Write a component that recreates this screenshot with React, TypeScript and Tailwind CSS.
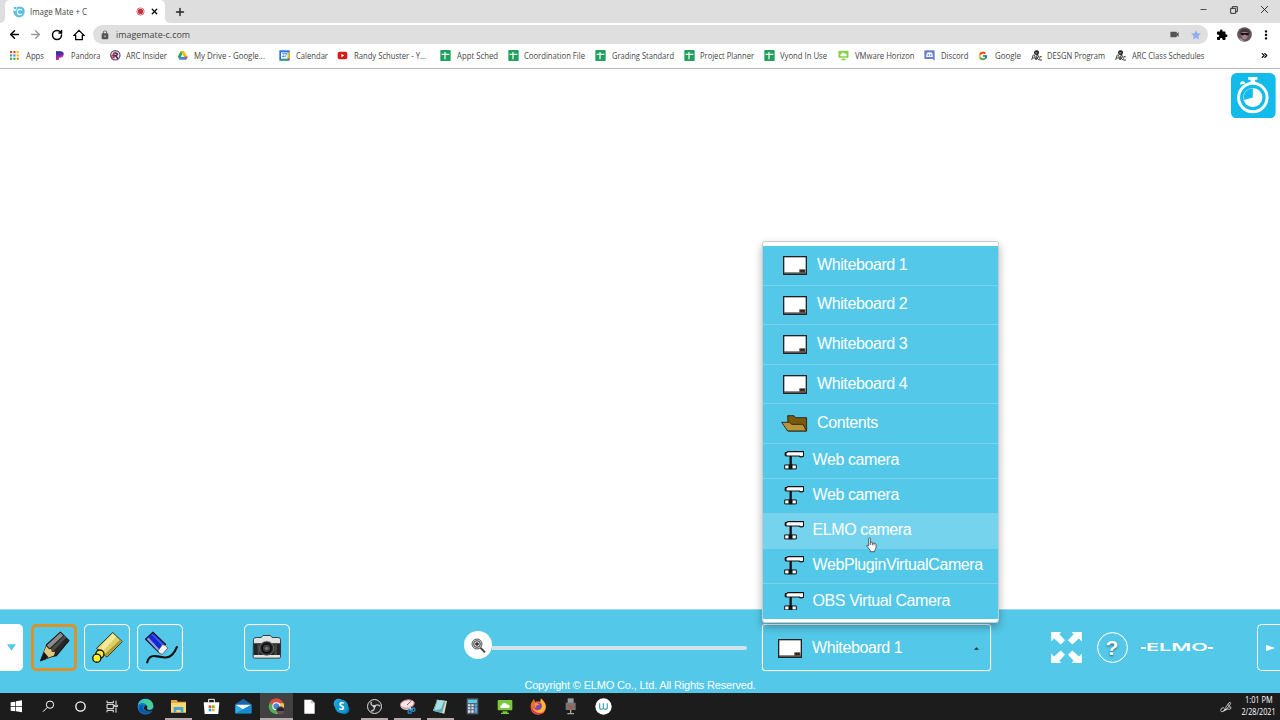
import type { ReactNode } from "react"
import { ArrowLeft, ArrowRight, ChevronsRight, Minus, Plus, RotateCw, X } from "lucide-react"
import { MdExtension, MdLock, MdMoreVert, MdStar, MdVideocam } from "react-icons/md"
import { FcGoogle } from "react-icons/fc"

function AppsIcon() {
  const colors = ["#ea4335", "#ea4335", "#fbbc04", "#34a853", "#4285f4", "#fbbc04", "#34a853", "#34a853", "#ea8600"]
  return (
    <svg viewBox="0 0 33 33" className="size-[11px]">
      {colors.map((c, i) => (
        <rect key={i} x={3 + (i % 3) * 10} y={3 + Math.floor(i / 3) * 10} width="6.5" height="6.5" fill={c} />
      ))}
    </svg>
  )
}

function PandoraIcon() {
  return (
    <svg viewBox="0 0 33 33" className="size-[11px]">
      <defs>
        <linearGradient id="pandora" x1="0" y1="0" x2="0.4" y2="1">
          <stop offset="0" stopColor="#2b3bb0" />
          <stop offset="0.5" stopColor="#7a2bb0" />
          <stop offset="1" stopColor="#f0288c" />
        </linearGradient>
      </defs>
      <path d="M3 4h12c8 0 12 4 11 10-1 7-6 9-13 9l-2 7H3z" fill="url(#pandora)" />
      <path d="M3 4h12c8 0 12 4 11 8L12 17 3 10z" fill="#1f2c7a" opacity=".4" />
    </svg>
  )
}

function ArcIcon() {
  return (
    <svg viewBox="0 0 33 33" className="size-[11px]">
      <circle cx="16" cy="16" r="14" fill="#f3dfe6" stroke="#574a74" strokeWidth="3.500" />
      <path d="M11 25V11c0-3 11-3 11 1s-3 5-9 5M17 17l7 9" fill="none" stroke="#3b2e5a" strokeWidth="4.500" />
      <path d="M3 20 16 8M4 26l10-8" stroke="#c23f5e" strokeWidth="4" />
    </svg>
  )
}

function DriveIcon() {
  return (
    <svg viewBox="0 0 33 33" className="size-[11px]">
      <path d="M11 4h10l-12 22H6L2 20z" fill="#2da94f" />
      <path d="M11 4h10l11 17H21z" fill="#fbbc04" />
      <path d="M8 20h24l-5 9H6z" fill="#4285f4" />
      <path d="M24 20h8l-5 9z" fill="#ea4335" />
      <path d="m16 13 5 7h-9z" fill="#fff" />
    </svg>
  )
}

function CalendarIcon() {
  return (
    <svg viewBox="0 0 33 33" className="size-[11px]">
      <path d="M1 1h31v31H1z" fill="#2673e8" />
      <path d="M26 7h6v18h-6z" fill="#fbbc04" />
      <path d="M6 26h20v6H6z" fill="#34a853" />
      <path d="M26 26h6l-6 6z" fill="#ea4335" />
      <path d="M6 7h20v19H6z" fill="#fff" />
      <text x="16" y="22" textAnchor="middle" fontSize="15" textLength="16" lengthAdjust="spacingAndGlyphs" fontWeight="700" fontFamily="Open Sans, sans-serif" fill="#2673e8">27</text>
    </svg>
  )
}

function YoutubeIcon() {
  return (
    <svg viewBox="0 0 33 33" className="size-[11px]">
      <rect x="2" y="5" width="29" height="23" rx="6" fill="#d91a1a" />
      <path d="m13 11 9 5.500-9 5.500z" fill="#fff" />
    </svg>
  )
}

function SheetIcon() {
  return (
    <svg viewBox="0 0 33 33" className="size-[11px]">
      <rect x="1" y="0" width="31" height="33" rx="2" fill="#1fa05b" />
      <path d="M5 13h23M15 6v22" stroke="#fff" strokeWidth="3.600" />
    </svg>
  )
}

function HorizonIcon({ className, fill = "#8bd04e" }: { className: string; fill?: string }) {
  return (
    <svg viewBox="0 0 48 48" className={className}>
      <rect x="2" y="3" width="44" height="31" rx="3" fill={fill} />
      <path d="M17 37h14v4h5v4H12v-4h5z" fill={fill} />
      <path d="M14 27c-6 0-6-8 0-8 1-8 13-10 16-2 8-2 11 9 4 10z" fill="#fff" />
    </svg>
  )
}

function DiscordIcon() {
  return (
    <svg viewBox="0 0 33 33" className="size-[11px]">
      <path d="M4 1h25q3 0 3 3v28l-6-5H4q-3 0-3-3V4q0-3 3-3z" fill="#6c80c8" />
      <path d="M9 8q7-3 15 0l3 12-6 2-2-2h-5l-2 2-6-2z" fill="#fff" />
      <path d="M11 13h4v4h-4zM18 13h4v4h-4z" fill="#6c80c8" />
    </svg>
  )
}

function ArcLogo() {
  return (
    <svg viewBox="0 0 33 33" className="size-[11px] overflow-visible">
      <path d="M9 9q0-8 8-8t7 8l-3 6-9-1z" fill="#222" />
      <path d="M13 7h6v3h-6z" fill="#bbb" />
      <path d="M7 14 2 30M5 24h8M10 14l5 16M17 30V17h5q5 4-4 7l7 7M32 20q-6-4-6 5t7 4" fill="none" stroke="#333" strokeWidth="2.800" />
    </svg>
  )
}

const bookmarks: { label: string; icon: ReactNode; width: string; text: string }[] = [
  { label: "Apps", icon: <AppsIcon />, width: "w-[45.500px]", text: "w-[18px]" },
  { label: "Pandora", icon: <PandoraIcon />, width: "w-[55px]", text: "w-[29.500px]" },
  { label: "ARC Insider", icon: <ArcIcon />, width: "w-[67.500px]", text: "w-[41px]" },
  { label: "My Drive - Google...", icon: <DriveIcon />, width: "w-[102px]", text: "w-[71px]" },
  { label: "Calendar", icon: <CalendarIcon />, width: "w-[58px]", text: "w-[32px]" },
  { label: "Randy Schuster - Y...", icon: <YoutubeIcon />, width: "w-[103px]", text: "w-[72px]" },
  { label: "Appt Sched", icon: <SheetIcon />, width: "w-[67.500px]", text: "w-[41px]" },
  { label: "Coordination File", icon: <SheetIcon />, width: "w-[87.500px]", text: "w-[61px]" },
  { label: "Grading Standard", icon: <SheetIcon />, width: "w-[88.500px]", text: "w-[62px]" },
  { label: "Project Planner", icon: <SheetIcon />, width: "w-[80px]", text: "w-[54px]" },
  { label: "Vyond In Use", icon: <SheetIcon />, width: "w-[74.500px]", text: "w-[47px]" },
  { label: "VMware Horizon", icon: <HorizonIcon className="size-[11px]" />, width: "w-[86px]", text: "w-[59.500px]" },
  { label: "Discord", icon: <DiscordIcon />, width: "w-[54px]", text: "w-[27.500px]" },
  { label: "Google", icon: <FcGoogle size={10} />, width: "w-[52.500px]", text: "w-[26px]" },
  { label: "DESGN Program", icon: <ArcLogo />, width: "w-[84.500px]", text: "w-[58px]" },
  { label: "ARC Class Schedules", icon: <ArcLogo />, width: "w-[100px]", text: "w-[72.500px]" },
]

function TabStrip() {
  return (
    <div className="flex h-[23px] bg-[#dedede]">
      <div className="w-[5px] bg-white">
        <div className="h-full rounded-br-[5px] bg-[#dedede]" />
      </div>
      <div className="flex w-40 items-center rounded-t-[5px] bg-white pl-2">
        <svg viewBox="0 0 36 36" className="size-3">
          <path d="M2 3h8v6H2zM1 12q0 21 17 22 16-1 17-17T18 2h-6v8H8v6" fill="#5bbfe3" />
          <path d="M27 12q-12-6-14 5 1 13 14 7" fill="none" stroke="#fff" strokeWidth="4" />
        </svg>
        <svg className="ml-[4.500px] h-[13px] w-[57px] overflow-visible">
          <text x="0" y="10" textLength="100%" lengthAdjust="spacingAndGlyphs" fontSize="8.400" fontFamily="Open Sans, sans-serif" fill="#444">Image Mate + C</text>
        </svg>
        <svg viewBox="0 0 27 27" className="ml-[49px] size-[9px]">
          <circle cx="13.500" cy="13.500" r="11" fill="none" stroke="#cf7080" strokeWidth="3" />
          <circle cx="13.500" cy="13.500" r="8" fill="#c5303c" />
        </svg>
        <X className="ml-[5.500px] size-[9px] text-black" strokeWidth={3.5} />
      </div>
      <div className="w-[5px] bg-white">
        <div className="h-full rounded-bl-[5px] bg-[#dedede]" />
      </div>
      <Plus className="ml-[4px] mt-[5.500px] size-[12px] text-[#222]" strokeWidth={2.8} />
      <div className="ml-auto flex h-[19px] items-center">
        <Minus className="size-[9px] text-[#222]" strokeWidth={2} />
        <svg viewBox="0 0 24 24" className="ml-[22px] size-2" fill="none" stroke="#222" strokeWidth="2.800">
          <path d="M2 7h15v15H2zM7 7V2h15v15h-5" />
        </svg>
        <svg viewBox="0 0 24 24" className="ml-[22px] mr-[11px] size-[9px]" stroke="#222" strokeWidth="2.500">
          <path d="m3 3 18 18M21 3 3 21" />
        </svg>
      </div>
    </div>
  )
}

function AddressBar() {
  return (
    <div className="flex h-[23px] items-center bg-white pl-[8px] text-black">
      <ArrowLeft className="size-[13px]" strokeWidth={2.800} />
      <ArrowRight className="ml-[8px] size-[13px] text-[#999]" strokeWidth={2.500} />
      <RotateCw className="ml-[9px] size-[12px]" strokeWidth={3} />
      <svg viewBox="0 0 36 36" className="ml-[9.500px] size-[12px]" fill="none" stroke="#000" strokeWidth="3.800">
        <path d="M3 19 18 4l15 15h-5v13H8V19z" />
      </svg>
      <div className="ml-[8.500px] flex h-[19px] w-[1115px] items-center rounded-full bg-[#dfdfdf] pl-[7px] pr-[6px]">
        <MdLock className="size-[10px] text-[#555]" />
        <svg className="ml-[6px] h-[15px] w-[74px] overflow-visible">
          <text x="0" y="11" textLength="100%" lengthAdjust="spacingAndGlyphs" fontSize="9.800" fontFamily="Open Sans, sans-serif" fill="#444">imagemate-c.com</text>
        </svg>
        <MdVideocam className="ml-auto size-[11px] text-[#555]" />
        <MdStar className="ml-[10px] size-[12px] text-[#8eaef0]" />
      </div>
      <MdExtension className="ml-[8px] size-[12px]" />
      <svg viewBox="0 0 45 45" className="ml-[8.500px] size-[15px]">
        <circle cx="22.500" cy="22.500" r="22" fill="#66555d" />
        <path d="M7 20Q10 4 27 6q12 3 12 16l-8-7-16 1z" fill="#43343c" />
        <path d="M12 18q10-6 20-1v12q-6 12-14 7-7-7-6-18z" fill="#a58487" />
        <path d="M11 18h24v5q-8 5-11-1-6 6-12 1z" fill="#17131a" />
        <path d="M4 34q11-3 18 10Q10 44 4 34z" fill="#9c9ca1" />
      </svg>
      <MdMoreVert className="ml-[7px] size-[14px]" />
    </div>
  )
}

function BookmarksBar() {
  return (
    <div className="flex h-[23px] items-center border-b border-[#bbb] bg-white pb-[3px] pl-[9px]">
      {bookmarks.map((b) => (
        <div key={b.label} className={`flex shrink-0 items-center gap-[5.500px] ${b.width}`}>
          <span className="flex w-[11px] shrink-0">{b.icon}</span>
          <svg className={`h-[13px] shrink-0 overflow-visible ${b.text}`}>
            <text x="0" y="9.500" textLength="100%" lengthAdjust="spacingAndGlyphs" fontSize="8.400" fontFamily="Open Sans, sans-serif" fill="#454545">
              {b.label}
            </text>
          </svg>
        </div>
      ))}
      <ChevronsRight className="ml-auto mr-[11px] size-[9px] text-black" strokeWidth={3.500} />
    </div>
  )
}

function WhiteboardIcon() {
  return (
    <svg viewBox="0 0 72 57" className="h-[19px] w-6 shrink-0">
      <rect x="2" y="2" width="68" height="53" fill="#fff" stroke="#222" strokeWidth="4" />
      <path d="M3 49h66v5H3z" fill="#555" />
      <path d="M49 40h18v10H49z" fill="#4a3b30" />
      <path d="M55 42v5M61 42v5" stroke="#111" strokeWidth="2.500" />
    </svg>
  )
}

function FolderIcon() {
  return (
    <svg viewBox="0 0 80 51" className="h-[17px] w-[26.600px] shrink-0" stroke="#1c1708" strokeWidth="2.500" strokeLinejoin="round">
      <path d="M20 2h19l5 6h33v40H22z" fill="#7c5a0c" />
      <path d="M2 22h24l6 6h34l11 20H20z" fill="#b9953a" />
    </svg>
  )
}

function CameraStandIcon() {
  return (
    <svg viewBox="0 0 61 56" className="h-[18.600px] w-[20.300px] shrink-0" stroke="#111" strokeLinejoin="round">
      <path d="M20 13v31" strokeWidth="7" />
      <path d="M4 8q0-4 5-4l2-2h48v13q-7 6-14 0H9q-5 0-5-3z" fill="#fff" strokeWidth="3.500" />
      <path d="M5 3v12" strokeWidth="5" />
      <path d="M2 42h35v12H2z" fill="#fff" strokeWidth="3" />
      <path d="M14 42h11v12H14z" fill="#111" strokeWidth="1" />
    </svg>
  )
}

const boards = ["Whiteboard 1", "Whiteboard 2", "Whiteboard 3", "Whiteboard 4", "Contents"]
const cameras = ["Web camera", "Web camera", "ELMO camera", "WebPluginVirtualCamera", "OBS Virtual Camera"]

function SourceMenu() {
  return (
    <div className="absolute -left-px -top-[384px] z-10 w-[237px] rounded-[3px] border border-[#c4cdcf] bg-white pb-[3px] pt-1 shadow-[0_4px_9px_rgba(0,0,0,0.3)]">
      {boards.map((label) => (
        <div key={label} className="flex h-[39.600px] items-center border-b border-[#78d3ee] bg-[#54c8e8]">
          {label === "Contents" ? (
            <span className="ml-[18px] flex w-[36px]"><FolderIcon /></span>
          ) : (
            <span className="ml-[20px] flex w-[34px] pt-[1px]"><WhiteboardIcon /></span>
          )}
          <span className="pb-[1px]">{label}</span>
        </div>
      ))}
      {cameras.map((label, i) => (
        <div
          key={i}
          className={`flex h-[35px] items-center whitespace-nowrap ${i === 4 ? "" : "border-b border-[#78d3ee]"} ${i === 2 ? "bg-[#76d3ee]" : "bg-[#54c8e8]"}`}
        >
          <span className="ml-[20.500px] flex w-[29px] pb-[1px]"><CameraStandIcon /></span>
          <span className="pb-[1.500px]">{label}</span>
        </div>
      ))}
      {/* pointer */}
      <svg viewBox="0 0 33 48" className="absolute left-[102.500px] top-[295px] h-4 w-[11px]" fill="#fff" stroke="#333" strokeWidth="2.200" strokeLinejoin="round">
        <path d="M8 27V4q2-3 5 0v13q3-3 6 1 3-2 5 1 5-1 6 3v11q-2 5-4 7v4H13v-4L2 27q0-5 6 0z" />
        <path d="M13 17v7M19 18v7M24 19v6" />
      </svg>
    </div>
  )
}

function ToolButton({ className, children }: { className: string; children: ReactNode }) {
  return <button className={`h-[47px] w-[46px] shrink-0 overflow-hidden rounded-[5px] ${className}`}>{children}</button>
}

function PencilIcon() {
  return (
    <svg viewBox="102 82 118 121" className="size-full">
      <path d="m180 97 25 25-37 45-9 1-38 14 17-43 1-5z" fill="#262626" stroke="#111" strokeWidth="3" strokeLinejoin="round" />
      <path d="m180 99 8 8-40 38-8-9z" fill="#8b8b8b" />
      <path d="m191 108 6 6-40 41-6-7z" fill="#4a4a4a" />
      <path d="m138 139 9 9 5-1 3 9 9-1-3 11-23 9-11-9z" fill="#e2c67b" />
      <path d="m131 155 14 16-24 11z" fill="#161616" />
    </svg>
  )
}

function MarkerIcon() {
  return (
    <svg viewBox="255 76 130 133" className="size-full" stroke="#171717" strokeLinejoin="round">
      <path d="m337 98 28 27-45 46-31-26z" fill="#dfd066" strokeWidth="2.500" />
      <path d="m337 102 10 9-41 44-10-9z" fill="#f4eb98" stroke="none" />
      <path d="m358 120 5 5-43 43-7-5z" fill="#aa9938" stroke="none" />
      <circle cx="299" cy="162" r="12" fill="#fae738" strokeWidth="4" />
      <circle cx="290" cy="174" r="12" fill="#fff125" strokeWidth="4" />
    </svg>
  )
}

function EraserIcon() {
  return (
    <svg viewBox="415 76 130 133" className="size-full" strokeLinejoin="round">
      <path d="m437 118 22-21 38 36-18 26z" fill="#1028cf" stroke="#111" strokeWidth="3" />
      <path d="m441 118 5-5 34 37-4 5z" fill="#8c9ce6" />
      <path d="m455 105 3-3 34 32-4 5z" fill="#3c58ea" />
      <path d="m487 134q9-1 16 10l-16 19q-11-2-13-11z" fill="#f1f2f5" stroke="#333" strokeWidth="2" />
      <path d="M442 187q5-21 24-19 10 1 27 4 23 3 37-31" fill="none" stroke="#111" strokeWidth="6" strokeLinecap="round" />
    </svg>
  )
}

function CameraIcon() {
  return (
    <svg viewBox="736 76 130 133" className="size-full">
      <path d="M761 119q0-6 8-6h15l5-6h22l5 6h18q7 0 7 6v51q0 4-4 4h-73q-4 0-4-4z" fill="#e2e3e4" stroke="#242424" strokeWidth="2.500" />
      <path d="M761 130h80v35h-80z" fill="#242527" />
      <path d="M773 130h6v35h-6zM823 130h7v35h-7z" fill="#454545" />
      <circle cx="800" cy="145" r="21" fill="#28282a" stroke="#888" strokeWidth="2" />
      <circle cx="800" cy="145" r="13" fill="#3d3d44" stroke="#070707" strokeWidth="4" />
      <circle cx="800" cy="145" r="5" fill="#77727e" />
    </svg>
  )
}

function Toolbar() {
  return (
    <div className="h-[84px] border-t border-[#9bd9e8] bg-[#54c8e8] text-white">
      <div className="flex h-[62px] pt-[14px]">
        <div className="flex h-[47px] w-[23px] items-center justify-center rounded-r-[5px] bg-white">
          <svg viewBox="0 0 27 20" className="h-[7px] w-[9px]"><path d="M0 0h27L13.500 20z" fill="#54c8e8" /></svg>
        </div>
        <ToolButton className="ml-[7.500px] border-[3px] border-[#dc922b]"><PencilIcon /></ToolButton>
        <ToolButton className="ml-[7px] border-[1.500px] border-white shadow-[inset_0_0_1px_#fff]"><MarkerIcon /></ToolButton>
        <ToolButton className="ml-[7.500px] border-[1.500px] border-white shadow-[inset_0_0_1px_#fff]"><EraserIcon /></ToolButton>
        <ToolButton className="ml-[60.500px] border-[1.500px] border-white shadow-[inset_0_0_1px_#fff]"><CameraIcon /></ToolButton>
        <div className="ml-[174.500px] flex h-[42px] w-[282.500px] items-center">
          <div className="flex size-[28px] shrink-0 items-center justify-center rounded-full bg-white">
            <svg viewBox="0 0 45 45" className="size-[15px]">
              <path d="m28 29 14 14" stroke="#444" strokeWidth="6" />
              <circle cx="18" cy="18" r="15" fill="#ddd" stroke="#555" strokeWidth="3" />
              <circle cx="18" cy="18" r="10" fill="#ddd" stroke="#444" strokeWidth="3" />
              <path d="M18 12v12M12 18h12" stroke="#333" strokeWidth="4" />
            </svg>
          </div>
          <div className="mt-[5px] h-1 grow rounded-r-full bg-[#cfe3e9]" />
        </div>
        <div className="relative ml-[15.500px] flex h-[47px] w-[229px] shrink-0 items-center rounded-[3px] border border-white pl-[15px] text-base tracking-[-0.400px] shadow-[0_0_1px_#fff]">
          <span className="flex pt-[2px]"><WhiteboardIcon /></span>
          <span className="ml-[10px]">Whiteboard 1</span>
          <svg viewBox="0 0 15 8" className="ml-auto mr-[11px] mt-[2px] h-[3px] w-[5px]"><path d="M7.500 0 15 8H0z" fill="#17323a" /></svg>
          <SourceMenu />
        </div>
        <svg viewBox="0 0 93 94" className="ml-[60px] mt-[8px] h-[31px] w-[31px] shrink-0" fill="#fff">
          <path d="M0 0h31l-6 7 17 18-13 13L9 20l-9 9zM93 0H62l6 7-17 18 13 13 20-18 9 9zM0 94h31l-6-7 17-18-13-13L9 74l-9-9zM93 94H62l6-7-17-18 13-13 20 18 9-9z" />
        </svg>
        <div className="ml-[14.500px] mt-[8px] flex size-[31px] shrink-0 items-center justify-center rounded-full border-[1.500px] border-white text-[21px] font-bold leading-none shadow-[inset_0_0_1px_#fff] [text-shadow:0_1px_2px_#28515d]">
          ?
        </div>
        <div className="ml-[13px] mt-[18px] flex h-[11px] w-[72px] shrink-0 items-center">
          <span className="h-[2px] w-[5px] shrink-0 bg-white" />
          <svg viewBox="0 0 62 11" className="h-[11px] w-[62px]">
            <text x="0" y="9" textLength="62" lengthAdjust="spacingAndGlyphs" fontFamily="Inter, sans-serif" fontSize="10.500" fontWeight="600" fill="#fff">ELMO</text>
          </svg>
          <span className="h-[2px] w-[5px] shrink-0 bg-white" />
        </div>
        <div className="ml-[44.500px] flex h-[47px] grow items-center rounded-l-[5px] border-[1.500px] border-r-0 border-white pl-[8px]">
          <svg viewBox="0 0 27 18" className="h-[6px] w-[9px]"><path d="M0 0 27 9 0 18z" fill="#fff" /></svg>
        </div>
      </div>
      <div className="pt-[5px] text-center text-[11px] leading-4 tracking-[-0.170px]">Copyright © ELMO Co., Ltd. All Rights Reserved.</div>
    </div>
  )
}

function TaskIcon({ children }: { children: ReactNode }) {
  return <svg viewBox="0 0 51 51" className="size-[17px]">{children}</svg>
}

const systemIcons = [
  <TaskIcon>
    <path d="m8 13 14-2v13H8zM24 10l18-3v17H24zM8 26h14v14L8 38zM24 26h18v17l-18-3z" fill="#fff" />
  </TaskIcon>,
  <TaskIcon>
    <circle cx="30" cy="20" r="11" fill="none" stroke="#fff" strokeWidth="3" />
    <path d="M22 28 9 41" stroke="#fff" strokeWidth="3" />
  </TaskIcon>,
  <TaskIcon>
    <circle cx="25.500" cy="25.500" r="14" fill="none" stroke="#fff" strokeWidth="4" />
  </TaskIcon>,
  <TaskIcon>
    <path d="M9 8v6h19V8M9 43v-6h19v6M9 19h19v13H9zM36 8v10M36 29v15M32 21h8v5h-8z" fill="none" stroke="#fff" strokeWidth="2.800" />
  </TaskIcon>,
]

const apps: { name: string; open?: boolean; active?: boolean; icon: ReactNode }[] = [
  {
    name: "edge",
    icon: (
      <TaskIcon>
        <circle cx="25.500" cy="25.500" r="24" fill="#1179c9" />
        <path d="M3 21C8-6 49-2 49 25c0 12-19 14-20 5 5-13-14-22-26-9z" fill="#47cf96" />
        <path d="M3 20C7 6 21 0 34 4c-14-1-18 8-16 10-7-1-12 2-15 6z" fill="#37b9da" />
        <path d="M19 22c-6 13 4 22 25 17-8 11-29 12-37-3-3-11 5-16 12-14z" fill="#0b59a5" />
        <path d="M28 22q6 5 2 9 0 7 12 5l7-5v5l-6 3q-19 4-22-9 1-7 7-8z" fill="#1b1b1b" />
      </TaskIcon>
    ),
  },
  {
    name: "explorer",
    open: true,
    icon: (
      <TaskIcon>
        <path d="M3 6h17l4 5h24v33H3z" fill="#e4a93a" />
        <path d="M3 15h45v28H3z" fill="#fbd876" />
        <path d="M11 27h29v17h-8v-8H19v8h-8z" fill="#4ba5db" />
      </TaskIcon>
    ),
  },
  {
    name: "store",
    icon: (
      <TaskIcon>
        <path d="M17 14V4h17v10" fill="none" stroke="#fff" strokeWidth="3" />
        <path d="M2 13h47l-3 35H5z" fill="#fff" />
        <path d="M17 22h8v8h-8z" fill="#e4512b" />
        <path d="M27 22h8v8h-8z" fill="#80b82a" />
        <path d="M17 32h8v8h-8z" fill="#219fdd" />
        <path d="M27 32h8v8h-8z" fill="#f8b719" />
      </TaskIcon>
    ),
  },
  {
    name: "mail",
    icon: (
      <TaskIcon>
        <path d="M1 19 25 2l24 17v27H1z" fill="#1767ad" />
        <path d="M1 20h48L25 35z" fill="#f4f8fb" />
        <path d="m1 20 24 15 24-15v26H1z" fill="#31b0eb" />
        <path d="m1 46 48-26v26z" fill="#168bd3" />
      </TaskIcon>
    ),
  },
  {
    name: "chrome",
    open: true,
    active: true,
    icon: (
      <TaskIcon>
        <circle cx="25" cy="25" r="23" fill="#4faf57" />
        <path d="M5 13C15-4 41-2 47 19H25l-8 8z" fill="#df4b3e" />
        <path d="M25 16h22c6 17-8 33-23 31l11-20z" fill="#efc54d" />
        <circle cx="25" cy="25" r="12" fill="#fff" />
        <circle cx="25" cy="25" r="9" fill="#4288d6" />
        <circle cx="37" cy="37" r="12" fill="#67515e" />
        <path d="M26 34q12-13 22 0v5H26z" fill="#2a2029" />
      </TaskIcon>
    ),
  },
  {
    name: "document",
    icon: (
      <TaskIcon>
        <path d="M10 5h21l10 10v32H10z" fill="#fff" />
        <path d="M31 5v10h10" fill="#ccc" stroke="#999" strokeWidth="1" />
      </TaskIcon>
    ),
  },
  {
    name: "skype",
    icon: (
      <TaskIcon>
        <circle cx="17" cy="17" r="15" fill="#21a8dc" />
        <circle cx="34" cy="34" r="15" fill="#087bb9" />
        <circle cx="25.500" cy="25.500" r="20" fill="#159ad1" />
        <text x="25.500" y="36" textAnchor="middle" fontSize="30" fontWeight="700" fontFamily="Open Sans, sans-serif" fill="#fff">S</text>
      </TaskIcon>
    ),
  },
  {
    name: "obs",
    open: true,
    icon: (
      <TaskIcon>
        <circle cx="25.500" cy="25.500" r="21" fill="#242326" stroke="#dedede" strokeWidth="3" />
        <path d="M25 25c-8-1-12-7-9-14M25 25c5-6 13-6 17 0M25 25c2 8-2 14-10 14" fill="none" stroke="#ccc" strokeWidth="4" />
        <circle cx="25" cy="25" r="4" fill="#ddd" />
      </TaskIcon>
    ),
  },
  {
    name: "snip",
    open: true,
    icon: (
      <TaskIcon>
        <ellipse cx="25" cy="18" rx="21" ry="12" fill="#f4e8ea" stroke="#cf7b83" strokeWidth="3" transform="rotate(-10 25 18)" />
        <path d="m24 21 13-12" stroke="#bd3d4b" strokeWidth="3" />
        <path d="M4 24q10 10 26 6l-2 6Q8 37 4 24z" fill="#ddc4c7" />
        <path d="m23 26 18 9M34 22v15" stroke="#ccc" strokeWidth="4" />
        <circle cx="32" cy="41" r="5" fill="none" stroke="#298bd0" strokeWidth="4" />
        <circle cx="43" cy="35" r="5" fill="none" stroke="#298bd0" strokeWidth="4" />
      </TaskIcon>
    ),
  },
  {
    name: "notepad",
    open: true,
    icon: (
      <TaskIcon>
        <path d="m16 5 29 4-8 38L3 38z" fill="#e0d9bb" />
        <path d="m16 5 25 4-11 35L3 38z" fill="#5fa9b9" />
        <path d="m17 7 19 3-9 23-20 4z" fill="#a7e1e5" />
        <path d="m14 7 29 4" stroke="#ddd" strokeWidth="3" strokeDasharray="3 2" />
      </TaskIcon>
    ),
  },
  {
    name: "calculator",
    icon: (
      <TaskIcon>
        <path d="M8 1h35v48H8z" fill="#536271" />
        <path d="M12 5h27v10H12z" fill="#59c9ed" />
        <path d="M12 19h7v6h-7zM22 19h7v6h-7zM12 28h7v6h-7zM22 28h7v6h-7zM12 37h7v7h-7zM22 37h7v7h-7z" fill="#d8e4ee" />
        <path d="M32 19h7v6h-7zM32 28h7v16h-7z" fill="#50a8dd" />
      </TaskIcon>
    ),
  },
  { name: "horizon", icon: <HorizonIcon className="size-4" fill="#7ac93c" /> },
  {
    name: "firefox",
    icon: (
      <TaskIcon>
        <path d="M7 10q3-7 5-6l4 8q8-4 16 0Q31 4 33 1q15 12 15 27-2 22-23 22Q4 49 2 29 1 17 7 10z" fill="#f36b2b" />
        <path d="M33 2q17 15 13 29-5 16-21 16Q10 46 8 30q5 7 14 8 14-3 14-16 1-6-5-9z" fill="#ffba32" />
        <path d="M3 27q2 21 22 22 11 0 17-8-16 9-29-3-7-5-10-11z" fill="#e32d65" />
        <circle cx="24" cy="25" r="11" fill="#8047bb" />
        <path d="M14 16q9-4 14 4l-10 3 1 7q-8-2-5-14z" fill="#ff9436" />
      </TaskIcon>
    ),
  },
  {
    name: "microphone",
    icon: (
      <TaskIcon>
        <path d="M17 1h18v14H17z" fill="#999ca0" />
        <path d="M11 14h30v22H11z" fill="#74777c" />
        <path d="M20 21h12v12H20z" fill="#b5583c" />
        <path d="M24 36h4v9h8v4H16v-4h8z" fill="#a4a7aa" />
      </TaskIcon>
    ),
  },
  {
    name: "w",
    icon: (
      <TaskIcon>
        <circle cx="25.500" cy="25.500" r="24.500" fill="#fff" />
        <path d="M14 16v13q0 5 5 5t6-5V16M25 29q1 5 6 5 6 0 6-6V16" fill="none" stroke="#439fba" strokeWidth="3.500" />
      </TaskIcon>
    ),
  },
]

function Taskbar() {
  return (
    <div className="flex h-[27px] bg-[#1c1c1c] text-white">
      {systemIcons.map((icon, i) => (
        <div key={i} className="flex w-8 items-center justify-center">{icon}</div>
      ))}
      <div className="ml-[1.500px] flex">
        {apps.map((app) => (
          <div key={app.name} className={`flex w-[32.700px] flex-col items-center ${app.active ? "bg-[#414141]" : ""}`}>
            <div className="flex h-[25px] items-center pt-[2px]">{app.icon}</div>
            {app.open && <div className={`h-[2px] bg-[#b7a9aa] ${app.active ? "w-full" : "w-[27px]"}`} />}
          </div>
        ))}
      </div>
      <div className="ml-auto flex items-center">
        <svg viewBox="0 0 36 36" className="size-3" fill="none" stroke="#ddd" strokeWidth="2.500">
          <path d="M14 24 27 5q5-3 5 3L18 27l-7 3zM23 10l6 5M14 24l5 3M12 20q-10-1-10 8 1 7 8 3 9-10 14-7t9-2q1-7-6-4" />
        </svg>
        <svg className="ml-[9px] mr-1 h-[27px] w-[35px] overflow-visible" fontFamily="Open Sans, sans-serif" fontSize="8.200" fill="#fff">
          <text x="4" y="10" textLength="27.500" lengthAdjust="spacingAndGlyphs">1:01 PM</text>
          <text x="0.500" y="22" textLength="34" lengthAdjust="spacingAndGlyphs">2/28/2021</text>
        </svg>
      </div>
    </div>
  )
}

export default function App() {
  return (
    <div className="flex h-[720px] w-[1280px] flex-col overflow-hidden bg-white font-['Open_Sans',sans-serif]">
      <TabStrip />
      <AddressBar />
      <BookmarksBar />
      <main className="flex grow justify-end pr-1 pt-[3.500px]">
        <svg viewBox="1143 217 136 137" className="h-[45.500px] w-[45px]">
          <rect x="1143" y="217" width="135" height="137" rx="17" fill="#12bbea" />
          <path d="M1195 229h28v8h-7v12h-14v-12h-7z" fill="#fff" />
          <path d="M1171 252q-2-9 8-10 7 1 7 6z" fill="#fff" />
          <circle cx="1209" cy="291" r="43" fill="none" stroke="#fff" strokeWidth="9" />
          <circle cx="1209" cy="291" r="29" fill="#fff" />
          <path d="M1209 291v-28q-24 2-28 25l1 10z" fill="#12bbea" />
        </svg>
      </main>
      <div className="font-['Liberation_Sans',Arial,sans-serif]">
        <Toolbar />
      </div>
      <Taskbar />
    </div>
  )
}
